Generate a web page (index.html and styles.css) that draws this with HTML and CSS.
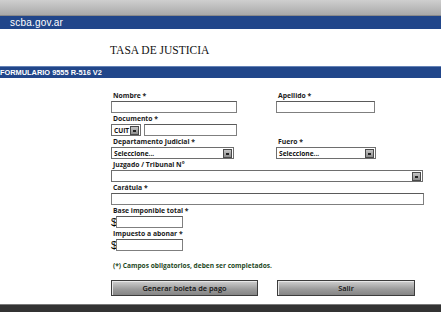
FILE: index.html
```html
<!DOCTYPE html>
<html lang="es">
<head>
  <meta charset="UTF-8">
  <title>Tasa de Justicia</title>
  <link rel="stylesheet" href="styles.css">
</head>
<body>
  <div class="topbar"></div>
  <div class="sitebar">scba.gov.ar</div>
  <div class="title">
    <h1>TASA DE JUSTICIA</h1>
  </div>
  <div class="formbar">FORMULARIO 9555 R-516 V2</div>

  <div class="form">
    <div class="row">
      <div class="field col-left">
        <label>Nombre *</label>
        <div class="input w-nombre"></div>
      </div>
      <div class="field col-right">
        <label>Apellido *</label>
        <div class="input w-apellido"></div>
      </div>
    </div>

    <div class="field">
      <label>Documento *</label>
      <div class="inline">
        <div class="select w-cuit"><span>CUIT</span><i class="drop"></i></div>
        <div class="input w-doc"></div>
      </div>
    </div>

    <div class="row">
      <div class="field col-left">
        <label>Departamento Judicial *</label>
        <div class="select w-depto"><span>Seleccione...</span><i class="drop"></i></div>
      </div>
      <div class="field col-right">
        <label>Fuero *</label>
        <div class="select w-fuero"><span>Seleccione...</span><i class="drop"></i></div>
      </div>
    </div>

    <div class="field">
      <label>Juzgado / Tribunal N°</label>
      <div class="select w-full"><span></span><i class="drop"></i></div>
    </div>

    <div class="field">
      <label>Carátula *</label>
      <div class="input w-caratula"></div>
    </div>

    <div class="field">
      <label>Base imponible total *</label>
      <div class="inline">
        <span class="currency">$</span>
        <div class="input w-money"></div>
      </div>
    </div>

    <div class="field">
      <label>Impuesto a abonar *</label>
      <div class="inline">
        <span class="currency">$</span>
        <div class="input w-money"></div>
      </div>
    </div>

    <p class="note">(*) Campos obligatorios, deben ser completados.</p>

    <div class="buttons">
      <button class="btn w-generar">Generar boleta de pago</button>
      <button class="btn w-salir">Salir</button>
    </div>
  </div>

  <div class="footer"></div>
</body>
</html>
```

FILE: styles.css
```css
body {
  margin: 0;
  background: #fff;
  font-family: "Open Sans", "Liberation Sans", sans-serif;
  color: #111;
}

.topbar {
  height: 15px;
  background: linear-gradient(#cfcfcf, #a9a9a9);
  border-bottom: 1px solid #8a8a8a;
}

.sitebar {
  height: 13px;
  background: #21468a;
  color: #fff;
  font-family: "Liberation Sans", Arial, sans-serif;
  font-size: 10px;
  line-height: 13px;
  padding-left: 10px;
  letter-spacing: 0.2px;
}

.title {
  height: 37px;
  padding-left: 110px;
  display: flex;
  align-items: center;
}

.title h1 {
  margin: 0;
  font-family: "Liberation Serif", "Times New Roman", serif;
  font-weight: normal;
  font-size: 11.5px;
  color: #111;
  padding-top: 4px;
}

.formbar {
  height: 11px;
  background: #21468a;
  border-top: 1px solid #6482b6;
  color: #fff;
  font-family: "Liberation Sans", Arial, sans-serif;
  font-weight: bold;
  font-size: 7.4px;
  line-height: 11px;
}

.form {
  padding: 13px 0 0 111px;
}

.row {
  display: flex;
}

.col-left {
  width: 165px;
}

.field {
  margin-bottom: 1px;
}

.field label {
  display: block;
  height: 10px;
  line-height: 10px;
  font-size: 6.8px;
  font-weight: bold;
  color: #1a1a1a;
  padding-left: 2px;
}

.inline {
  display: flex;
  align-items: center;
  gap: 3px;
}

.input {
  box-sizing: border-box;
  height: 12px;
  border: 1px solid #7f7f7f;
  border-top-color: #5a5a5a;
  background: #fff;
}

.select {
  box-sizing: border-box;
  height: 12px;
  border: 1px solid #6e6e6e;
  background: #fff;
  display: flex;
  align-items: center;
  justify-content: space-between;
  padding: 0 1px 0 2px;
  font-size: 6.6px;
  font-weight: bold;
  color: #111;
}

.drop {
  box-sizing: border-box;
  width: 9px;
  height: 9px;
  border: 1px solid #4a4a4a;
  background: linear-gradient(#c4c4c4, #8e8e8e);
  position: relative;
}

.drop::after {
  content: "";
  position: absolute;
  left: 2px;
  top: 3px;
  width: 3px;
  height: 1px;
  border-top: 2px solid #222;
}

.w-nombre { width: 126px; }
.w-apellido { width: 99px; }
.w-cuit { width: 30px; }
.w-doc { width: 93px; }
.w-depto { width: 123px; }
.w-fuero { width: 100px; }
.w-full { width: 312px; }
.w-caratula { width: 313px; }
.w-money { width: 67px; }

.currency {
  font-size: 11px;
  font-family: "Liberation Sans", Arial, sans-serif;
  width: 3px;
  color: #000;
}

.w-money {
  margin-left: -1px;
}

.note {
  margin: 10px 0 0 2px;
  height: 10px;
  line-height: 10px;
  font-size: 6.6px;
  font-weight: bold;
  color: #1f4a1f;
}

.buttons {
  display: flex;
  gap: 19px;
  margin-top: 9px;
}

.btn {
  box-sizing: border-box;
  height: 16px;
  border: 1px solid #3c3c3c;
  border-radius: 0;
  background: linear-gradient(#d0d0d0, #9a9a9a 60%, #858585);
  font-family: "Open Sans", "Liberation Sans", sans-serif;
  font-size: 7.4px;
  font-weight: 600;
  color: #111;
  padding: 0;
  box-shadow: inset 1px 1px 0 #e8e8e8;
}

.w-generar { width: 147px; }
.w-salir { width: 138px; }

.footer {
  margin-top: 8px;
  height: 8px;
  background: #333;
  border-top: 1px solid #7a7a7a;
}
```
